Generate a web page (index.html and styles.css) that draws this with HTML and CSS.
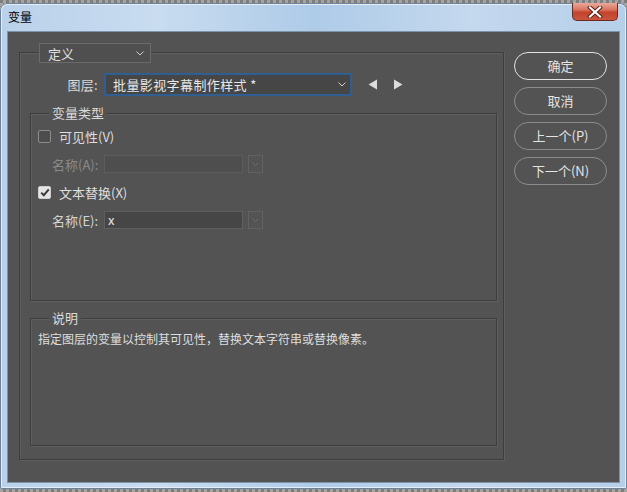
FILE: index.html
```html
<!DOCTYPE html>
<html lang="zh">
<head>
<meta charset="utf-8">
<title>变量</title>
<link rel="stylesheet" href="styles.css">
</head>
<body>
<div class="window">
  <div class="titlebar">
    <span class="title">变量</span>
    <div class="close">
      <svg width="16" height="12" viewBox="0 0 16 12"><path d="M3 1.5 L13 10.5 M13 1.5 L3 10.5" stroke="#5a1a12" stroke-width="4" stroke-linecap="square"/><path d="M3 1.5 L13 10.5 M13 1.5 L3 10.5" stroke="#ffffff" stroke-width="2.2" stroke-linecap="square"/></svg>
    </div>
  </div>
  <div class="client">
    <div class="group outer">
      <div class="legend-select">
        <span>定义</span>
        <svg class="chev" width="8" height="5" viewBox="0 0 8 5"><path d="M0.5 0.5 L4 4 L7.5 0.5" fill="none" stroke="#cfcfcf" stroke-width="1"/></svg>
      </div>
      <div class="layer-row">
        <span class="layer-label">图层:</span>
        <div class="layer-select">
          <span>批量影视字幕制作样式 *</span>
          <svg class="chev" width="8" height="5" viewBox="0 0 8 5"><path d="M0.5 0.5 L4 4 L7.5 0.5" fill="none" stroke="#cfcfcf" stroke-width="1"/></svg>
        </div>
        <div class="arrows">
          <svg width="10" height="11" viewBox="0 0 10 11"><path d="M9 0.5 L9 10.5 L0.5 5.5 Z" fill="#dcdcdc"/></svg>
          <svg width="10" height="11" viewBox="0 0 10 11"><path d="M1 0.5 L1 10.5 L9.5 5.5 Z" fill="#dcdcdc"/></svg>
        </div>
      </div>
      <div class="group types">
        <div class="legend"><span>变量类型</span></div>
        <div class="row check-row">
          <span class="checkbox"></span>
          <span class="check-label">可见性(V)</span>
        </div>
        <div class="row field-row disabled">
          <span class="field-label">名称(A):</span>
          <span class="input"></span>
          <span class="dd-btn"><svg width="7" height="4" viewBox="0 0 7 4"><path d="M0.5 0.5 L3.5 3.5 L6.5 0.5" fill="none" stroke="#6e6e6e" stroke-width="1"/></svg></span>
        </div>
        <div class="row check-row">
          <span class="checkbox checked"><svg width="10" height="9" viewBox="0 0 10 9"><path d="M1.2 4.6 L3.8 7.2 L8.8 1.4" fill="none" stroke="#3a3a3a" stroke-width="2"/></svg></span>
          <span class="check-label">文本替换(X)</span>
        </div>
        <div class="row field-row">
          <span class="field-label">名称(E):</span>
          <span class="input">x</span>
          <span class="dd-btn"><svg width="7" height="4" viewBox="0 0 7 4"><path d="M0.5 0.5 L3.5 3.5 L6.5 0.5" fill="none" stroke="#6e6e6e" stroke-width="1"/></svg></span>
        </div>
      </div>
      <div class="group desc">
        <div class="legend"><span>说明</span></div>
        <p class="desc-text">指定图层的变量以控制其可见性，替换文本字符串或替换像素。</p>
      </div>
    </div>
    <div class="buttons">
      <div class="btn primary">确定</div>
      <div class="btn">取消</div>
      <div class="btn">上一个(P)</div>
      <div class="btn">下一个(N)</div>
    </div>
  </div>
</div>
</body>
</html>
```

FILE: styles.css
```css
html, body {
  margin: 0;
  padding: 0;
}
body {
  width: 627px;
  height: 492px;
  overflow: hidden;
  background-color: #8e8e8e;
  background-image: repeating-conic-gradient(#a4a4a4 0 25%, #7e7e7e 0 50%);
  background-size: 6px 6px;
  font-family: "Noto Sans CJK SC", "Liberation Sans", sans-serif;
}
.window {
  margin-top: 3px;
  width: 627px;
  height: 486px;
  box-sizing: border-box;
  padding: 0 8px 7px 8px;
  border-radius: 7px 7px 2px 2px;
  background: linear-gradient(90deg, #b9d1ea 0%, #c9dcf0 25%, #aecbe8 50%, #c4d8ee 75%, #b6cfe9 100%);
  box-shadow: inset 0 0 0 1px #6f8398, inset 0 0 0 2px #e4eef8;
  display: flex;
  flex-direction: column;
}
.titlebar {
  height: 29px;
  display: flex;
  align-items: flex-start;
}
.title {
  font-size: 12px;
  color: #000;
  line-height: 14px;
  margin-top: 7px;
}
.close {
  margin-left: auto;
  margin-right: 1px;
  width: 46px;
  height: 18px;
  box-sizing: border-box;
  border: 1px solid #6b2a22;
  border-top: none;
  border-radius: 0 0 5px 5px;
  background: linear-gradient(180deg, #e9a99c 0%, #d9735f 40%, #c4432d 55%, #c9553e 100%);
  display: flex;
  align-items: center;
  justify-content: center;
}
.client {
  height: 450px;
  background: #535353;
  box-shadow: 0 0 0 1px #7d93aa;
  display: flex;
  align-items: flex-start;
  color: #d8d8d8;
}
.group {
  box-sizing: border-box;
  border: 1px solid #3d3d3d;
  box-shadow: inset 1px 1px 0 #5f5f5f, 1px 1px 0 #5f5f5f;
}
.outer {
  margin-left: 11px;
  margin-top: 20px;
  width: 485px;
  height: 408px;
  display: flex;
  flex-direction: column;
}
.legend-select {
  margin-top: -10px;
  margin-left: 19px;
  width: 112px;
  height: 20px;
  box-sizing: border-box;
  border: 1px solid #6a6a6a;
  background: #4f4f4f;
  display: flex;
  align-items: center;
  padding: 0 6px 0 8px;
  font-size: 13px;
  color: #e2e2e2;
}
.chev {
  margin-left: auto;
}
.layer-row {
  margin-top: 10px;
  height: 23px;
  display: flex;
  align-items: center;
}
.layer-label {
  width: 78px;
  text-align: right;
  font-size: 13px;
  letter-spacing: 0.3px;
}
.layer-select {
  margin-left: 6px;
  width: 248px;
  height: 23px;
  box-sizing: border-box;
  border: 2px solid #2f5f92;
  background: #464646;
  display: flex;
  align-items: center;
  padding: 0 4px 0 7px;
  font-size: 13px;
  letter-spacing: 0.4px;
  color: #e8e8e8;
}
.arrows {
  margin-left: 16px;
  display: flex;
  gap: 15px;
}
.types {
  margin-top: 17px;
  margin-left: 10px;
  width: 467px;
  height: 188px;
  display: flex;
  flex-direction: column;
  gap: 10px;
}
.legend {
  margin-top: -9px;
  margin-left: 18px;
  height: 16px;
  display: flex;
}
.legend span {
  background: #535353;
  padding: 0 3px;
  font-size: 13px;
  line-height: 16px;
  color: #dadada;
}
.types .legend {
  margin-bottom: -4px;
}
.row {
  height: 18px;
  display: flex;
  align-items: center;
  font-size: 13px;
}
.check-row {
  padding-left: 7px;
}
.checkbox {
  width: 13px;
  height: 13px;
  box-sizing: border-box;
  border: 1px solid #8d8d8d;
  background: #4d4d4d;
  border-radius: 2px;
  display: flex;
  align-items: center;
  justify-content: center;
}
.checkbox.checked {
  background: #e4e4e4;
  border-color: #cfcfcf;
}
.check-label {
  margin-left: 8px;
  color: #dedede;
}
.field-row {
  padding-left: 21px;
}
.field-label {
  width: 52px;
  color: #d4d4d4;
}
.disabled .field-label {
  color: #8a8a8a;
}
.input {
  width: 139px;
  height: 18px;
  box-sizing: border-box;
  border: 1px solid #5f5f5f;
  background: #464646;
  padding-left: 3px;
  font-size: 13px;
  line-height: 15px;
  color: #e6e6e6;
}
.disabled .input {
  background: #4e4e4e;
  border-color: #5c5c5c;
}
.dd-btn {
  margin-left: 5px;
  width: 15px;
  height: 18px;
  box-sizing: border-box;
  border: 1px solid #626262;
  display: flex;
  align-items: center;
  justify-content: center;
}
.desc {
  margin-top: 17px;
  margin-left: 10px;
  width: 467px;
  height: 128px;
}
.desc-text {
  margin: 5px 0 0 7px;
  font-size: 12px;
  line-height: 16px;
  color: #dedede;
}
.buttons {
  margin-left: 10px;
  margin-top: 20px;
  display: flex;
  flex-direction: column;
  gap: 7px;
}
.btn {
  width: 93px;
  height: 28px;
  box-sizing: border-box;
  border: 1px solid #8c8c8c;
  border-radius: 14px;
  display: flex;
  align-items: center;
  justify-content: center;
  font-size: 13px;
  line-height: 16px;
  padding-bottom: 1px;
  color: #e4e4e4;
}
.btn.primary {
  border: 1.5px solid #e2e2e2;
}
```
